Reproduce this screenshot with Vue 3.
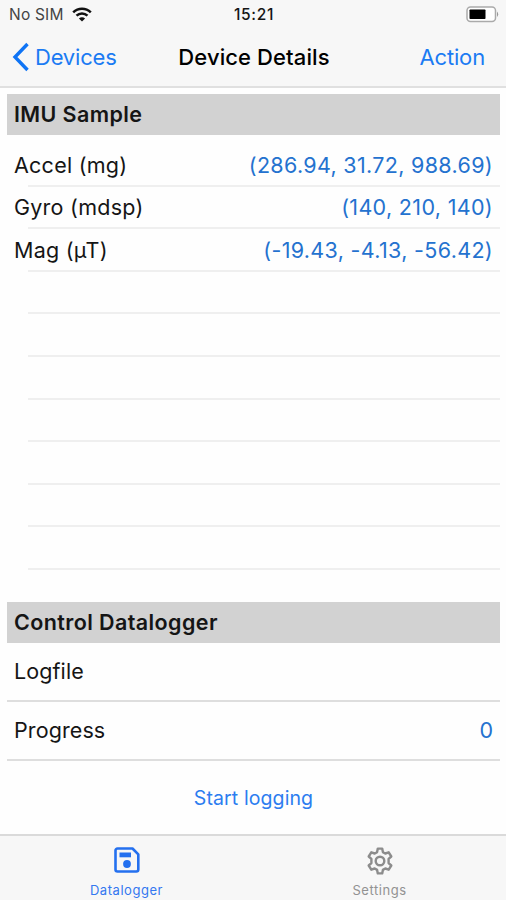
<script setup>
const samples = [
  { label: 'Accel (mg)', value: '(286.94, 31.72, 988.69)', name: 'accel' },
  { label: 'Gyro (mdsp)', value: '(140, 210, 140)', name: 'gyro' },
  { label: 'Mag (µT)', value: '(-19.43, -4.13, -56.42)', name: 'mag' },
]
const emptyRows = 7
</script>

<template>
  <div class="screen">
    <header class="top">
      <div class="status">
        <div class="carrier">
          <span class="sim">No SIM</span>
          <svg class="wifi" width="20" height="15" viewBox="0 0 20 15">
            <g fill="none" stroke="#111" stroke-width="2.5">
              <path d="M1.200 5.300C6.200.4 13.800.4 18.800 5.300" />
              <path d="M4.500 8.700C7.600 5.700 12.400 5.700 15.500 8.700" />
            </g>
            <path d="M10 14.600 6.900 11.500C8.600 9.900 11.400 9.900 13.100 11.500Z" fill="#111" />
          </svg>
        </div>
        <span class="clock">15:21</span>
        <svg class="battery" width="33" height="17" viewBox="0 0 33 17">
          <rect x="1" y="1" width="28.500" height="14.500" rx="3.500" fill="#fff" stroke="#aaa" stroke-width="1.500" />
          <rect x="3.500" y="3.500" width="16" height="9.500" rx="0.800" fill="#000" />
          <path d="M31 5.500Q33.300 8.200 31 11Z" fill="#999" />
        </svg>
      </div>
      <nav class="navbar">
        <a class="back">
          <svg width="18" height="30" viewBox="0 0 18 30">
            <path d="M15.500 2 3 15l12.500 13" fill="none" stroke="#0f74f5" stroke-width="3.400" />
          </svg>
          <span>Devices</span>
        </a>
        <h1>Device Details</h1>
        <a class="action">Action</a>
      </nav>
    </header>

    <main>
      <h2>IMU Sample</h2>
      <ul class="samples">
        <li v-for="s in samples" :key="s.name" :class="s.name">
          <span class="label">{{ s.label }}</span>
          <span class="value">{{ s.value }}</span>
        </li>
        <li v-for="n in emptyRows" :key="n"></li>
      </ul>
      <h2>Control Datalogger</h2>
      <div class="field logfile"><span class="label">Logfile</span></div>
      <div class="field progress"><span class="label">Progress</span><span class="value">0</span></div>
      <button class="start">Start logging</button>
    </main>

    <footer>
      <div class="tab active">
        <svg width="26" height="26" viewBox="0 0 26 26">
          <path d="M3.500 1.500H18.500L24.300 7.300V22.500A2 2 0 0 1 22.300 24.500H3.500A2 2 0 0 1 1.500 22.500V3.500A2 2 0 0 1 3.500 1.500Z" fill="none" stroke="#2470ef" stroke-width="2.600" stroke-linejoin="round" />
          <rect x="5.500" y="5.500" width="11.500" height="4.800" fill="#2470ef" />
          <circle cx="13" cy="17" r="3.900" fill="#2470ef" />
        </svg>
        <span>Datalogger</span>
      </div>
      <div class="tab">
        <svg width="28" height="28" viewBox="0 0 28 28" fill="none" stroke="#8c8c8c" stroke-width="2.400" stroke-linejoin="round">
          <path d="M11.800 1.600h4.400l.7 3.500 2.400 1.400 3.400-1.200 2.600 4.200-2.700 2.400v4.200l2.700 2.400-2.600 4.200-3.400-1.200-2.400 1.400-.7 3.500h-4.400l-.7-3.500-2.400-1.400-3.400 1.200-2.600-4.200 2.700-2.400v-4.200L2.700 9.500l2.600-4.200 3.400 1.200 2.400-1.400Z" />
          <circle cx="14" cy="14" r="4.300" />
        </svg>
        <span>Settings</span>
      </div>
    </footer>
  </div>
</template>

<style>
body {
  margin: 0;
  background: #fefefe;
}
</style>

<style scoped>
.screen {
  width: 506px;
  height: 900px;
  display: flex;
  flex-direction: column;
  font-family: Inter, "Liberation Sans", sans-serif;
  color: #151515;
  background: #fefefe;
  overflow: hidden;
}
.top {
  flex: none;
  height: 88px;
  box-sizing: border-box;
  background: #f7f7f7;
  border-bottom: 2px solid #e0e0e0;
}
.status {
  height: 28px;
  display: grid;
  grid-template-columns: 1fr auto 1fr;
  align-items: center;
  padding: 0 7px 0 9px;
  font-size: 15.500px;
}
.carrier {
  display: flex;
  align-items: center;
  gap: 8px;
}
.sim { color: #444; letter-spacing: 0.200px; }
.clock { font-weight: 500; letter-spacing: 0.700px; }
.battery { justify-self: end; }
.navbar {
  height: 58px;
  display: grid;
  grid-template-columns: 1fr auto 1fr;
  align-items: center;
  padding: 0 12px;
  font-size: 22px;
  line-height: 28px;
}
.back {
  display: flex;
  align-items: center;
  gap: 5px;
  letter-spacing: -0.200px;
}
.back, .action { color: #1b7bf3; }
.action { justify-self: end; margin-right: 9px; letter-spacing: -0.150px; }
h1, h2 {
  margin: 0;
  font-weight: 600;
}
h1 {
  font-size: 22px;
  font-weight: 500;
  letter-spacing: 0.100px;
  padding-left: 2px;
  color: #000;
}
main {
  flex: none;
  height: 746px;
  box-sizing: border-box;
  padding: 6px 6px 0 7px;
}
h2 {
  height: 41px;
  line-height: 41px;
  padding-left: 7px;
  font-size: 21.500px;
  letter-spacing: 0.400px;
  background: #d2d2d2;
}
.samples {
  list-style: none;
  margin: 0;
  padding: 9px 0 32px;
}
.samples li {
  height: 42.600px;
  box-sizing: border-box;
  margin-left: 21px;
  padding-top: 1px;
  border-bottom: 2px solid #efefef;
  display: flex;
  justify-content: space-between;
  align-items: center;
}
.samples .label { margin-left: -14px; letter-spacing: 0.250px; }
.samples .value { letter-spacing: 0.330px; }
.label, .value { font-size: 21.500px; white-space: nowrap; }
.value { color: #2472cf; margin-right: 7px; }
.field {
  height: 59px;
  box-sizing: border-box;
  border-bottom: 2px solid #dedede;
  padding-left: 7px;
  display: flex;
  align-items: center;
  justify-content: space-between;
}
.field .label { letter-spacing: 0.100px; }
.start {
  display: block;
  width: 100%;
  height: 74px;
  padding: 0;
  border: 0;
  background: none;
  font: 19.500px Inter, sans-serif;
  letter-spacing: 0.100px;
  color: #2c7df0;
}
footer {
  flex: none;
  height: 66px;
  box-sizing: border-box;
  display: grid;
  grid-template-columns: 1fr 1fr;
  background: #f7f7f7;
  border-top: 2px solid #dadada;
}
.tab {
  display: flex;
  flex-direction: column;
  align-items: center;
  justify-content: space-between;
  padding: 11px 0 2px;
  color: #929292;
  font-size: 13px;
  letter-spacing: 0.550px;
  line-height: 16px;
}
.active { color: #3478f0; }
</style>
